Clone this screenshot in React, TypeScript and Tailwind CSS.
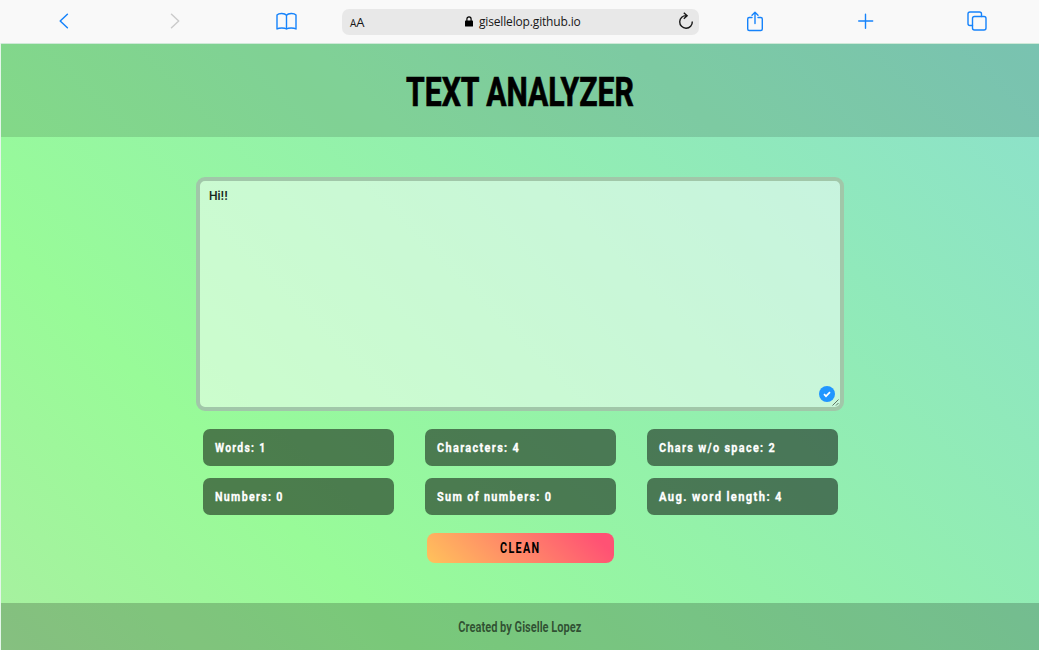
import type { ReactNode } from "react";

function Icon({ children, className }: { children: ReactNode; className: string }) {
  return (
    <svg viewBox="0 0 24 24" fill="none" stroke="currentColor" strokeLinecap="round" strokeLinejoin="round" className={className}>
      {children}
    </svg>
  );
}

function BrowserBar() {
  return (
    <div className="grid h-[43px] shrink-0 grid-cols-[342px_357px_1fr] items-center bg-[#f9f9f9] text-[#1683fb]">
      <div className="flex items-center pb-px">
        <Icon className="ml-[52px] size-6 stroke-[1.5]"><path d="M15.400 5.200 8.200 12l7.200 6.800" /></Icon>
        <Icon className="ml-[87px] size-6 stroke-[1.5] text-[#cbcbcb]"><path d="m8.500 5.200 7.200 6.800-7.200 6.800" /></Icon>
        <Icon className="ml-[87px] size-6 stroke-[1.4]">
          <path d="M12.500 6.200C10.700 4.100 5 3.900 3 6v14c2-1.300 7.700-1.300 9.500 0 1.800-1.300 7.500-1.300 9.500 0V6C20 3.900 14.300 4.100 12.500 6.200V20" />
        </Icon>
      </div>
      <div className="flex h-[26px] items-center rounded-[7px] bg-[#e8e8e8] font-['Open_Sans',sans-serif] text-[#171717]">
        <span className="ml-[8px] flex w-[115px] items-baseline pt-0.5"><span className="text-[10px]">A</span><span className="text-[13px]">A</span></span>
        <svg viewBox="0 0 8 11" className="h-[11px] w-2"><rect y="4.600" width="8" height="6" rx=".7" fill="#000" /><path d="M1.900 5V3a2.100 2.100 0 0 1 4.200 0v2" fill="none" stroke="#000" strokeWidth="1.200" /></svg>
        <span className="ml-[6px] w-[102px] whitespace-nowrap text-[12px] tracking-[-0.16px]">gisellelop.github.io</span>
        <svg viewBox="0 0 18 20" className="mb-0.5 ml-[96px] h-5 w-[18px]" fill="none" stroke="#171717" strokeWidth="1.400"><path d="M9.400 4.600A6.300 6.300 0 1 0 15.300 10.500M6.800 1.700l3.300 3-3.300 3" /></svg>
      </div>
      <div className="flex items-center pb-px">
        <Icon className="ml-[44px] size-6 stroke-[1.4]"><path d="M9 8.500H6.200a1.500 1.500 0 0 0-1.500 1.500v10a1.500 1.500 0 0 0 1.500 1.500h11.600a1.500 1.500 0 0 0 1.500-1.500V10a1.500 1.500 0 0 0-1.500-1.500H15M12 14.500V3.500M9 6.200 12 3.300l3 2.900" /></Icon>
        <Icon className="ml-[87px] size-6 stroke-[1.4]"><path d="M11.500 5.200v14M4.700 12h14" /></Icon>
        <Icon className="ml-[87px] size-6 stroke-[1.4]"><rect x="7.500" y="7.500" width="13.500" height="13.500" rx="2" /><path d="M7.500 16.500H5a2 2 0 0 1-2-2V5a2 2 0 0 1 2-2h9.500a2 2 0 0 1 2 2v2.500" /></Icon>
      </div>
    </div>
  );
}

const stats = [
  { label: "Words: 1", fit: "scale-x-[0.8]" },
  { label: "Characters: 4", fit: "scale-x-[0.84]" },
  { label: "Chars w/o space: 2", fit: "scale-x-[0.835]" },
  { label: "Numbers: 0", fit: "scale-x-[0.82]" },
  { label: "Sum of numbers: 0", fit: "scale-x-[0.835]" },
  { label: "Aug. word length: 4", fit: "scale-x-[0.86]" },
];

export default function App() {
  return (
    <div className="flex h-[650px] w-[1039px] flex-col overflow-hidden bg-[#e4f6e9]">
      <BrowserBar />
      <div className="ml-px flex min-h-0 flex-1 flex-col border-t border-[#cfe9d8] bg-[linear-gradient(45deg,#a8f0a0_0%,#98fb98_25%,#8ce0cc_100%)] font-[Roboto,sans-serif] font-bold">
        <header className="flex h-[93px] shrink-0 items-center justify-center bg-black/[0.13] pt-1">
          <h1 className="origin-center scale-x-[0.735] whitespace-nowrap text-[41px] leading-none text-black [-webkit-text-stroke:0.7px_black]">TEXT ANALYZER</h1>
        </header>
        <main className="flex flex-1 flex-col items-center pt-[40px]">
          <div className="relative h-[234px] w-[648px] rounded-[9px] border-4 border-[#a1c7a9] bg-white/50 px-[9px] pt-2">
            <p className="font-[Inter,sans-serif] text-[11.500px] font-semibold leading-[14px] text-[#17271c]">Hi!!</p>
            <svg viewBox="0 0 16 16" className="absolute right-[5px] bottom-[5px] size-4"><circle cx="8" cy="8" r="8" fill="#2196ff" /><path d="m5 8.200 2 2 4-4" fill="none" stroke="#fff" strokeWidth="1.700" /></svg>
            <svg viewBox="0 0 7 7" className="absolute right-px bottom-px size-[7px]" stroke="#607665"><path d="m.5 6.500 6-6M4 6.500 6.500 4" /></svg>
          </div>
          <div className="mt-[18px] grid grid-cols-[191px_191px_191px] gap-x-[31px] gap-y-[12px]">
            {stats.map(({ label, fit }) => (
              <div key={label} className="flex h-[37px] items-center rounded-[7px] bg-black/50 pl-3 text-[13px] tracking-[1.6px] text-white [-webkit-text-stroke:0.3px_white]">
                <span className={`origin-left whitespace-nowrap ${fit}`}>{label}</span>
              </div>
            ))}
          </div>
          <button className="mt-[18px] h-[30px] w-[187px] rounded-[8px] bg-[linear-gradient(45deg,#ffc35b,#ff5274_90%)] pt-px text-[14px] tracking-[1.7px] text-black">
            <span className="inline-block scale-x-[0.77]">CLEAN</span>
          </button>
        </main>
        <footer className="flex h-[47px] shrink-0 items-center justify-center bg-black/20 pt-0.5 text-[14px] text-black/60">
          <span className="scale-x-[0.79] whitespace-nowrap">Created by Giselle Lopez</span>
        </footer>
      </div>
    </div>
  );
}
